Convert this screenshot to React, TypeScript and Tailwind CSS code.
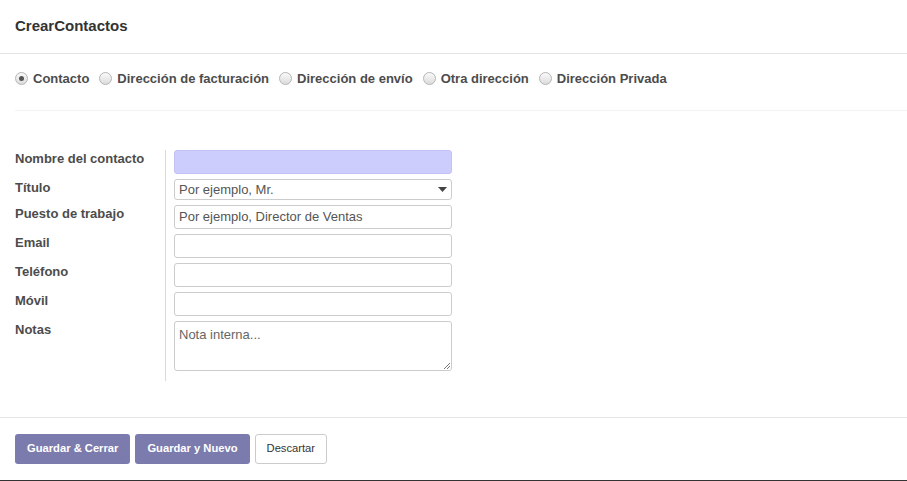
import React from 'react';

const tipos = ['Contacto', 'Dirección de facturación', 'Dirección de envío', 'Otra dirección', 'Dirección Privada'];

const Radio: React.FC<{ label: string; checked?: boolean }> = ({ label, checked }) => (
  <label className="flex items-center gap-[5px] mr-[10px]">
    <span className="w-[13px] h-[13px] rounded-full border border-[#b5b5b5] bg-gradient-to-b from-[#fafafa] to-[#dcdcdc] flex items-center justify-center">
      {checked && <span className="w-[5px] h-[5px] rounded-full bg-[#555]" />}
    </span>
    <span>{label}</span>
  </label>
);

const Field: React.FC<{ label: string; first?: boolean; children: React.ReactNode }> = ({ label, first, children }) => (
  <div className="flex">
    <div className={`w-[150px] leading-[16px] font-bold text-[#4c4c4c] ${first ? 'pt-[1px]' : 'pt-[6px]'}`}>{label}</div>
    <div className="w-[9px] border-l border-[#d9d9d9]" />
    {children}
  </div>
);

const inputCls = 'w-[278px] h-[24px] rounded-[3px] border border-[#ccc] px-[4px] text-[13px] text-[#555] bg-white';

export default function App() {
  return (
    <div className="w-[907px] h-[481px] bg-white flex flex-col text-[13px] text-[#4c4c4c] font-['Liberation_Sans',Arial,sans-serif] border-b border-[#333]">
      <div className="h-[54px] border-b border-[#e5e5e5] px-[15px] flex items-center">
        <h1 className="font-bold text-[15px] text-[#333]">CrearContactos</h1>
      </div>

      <div className="ml-[15px] h-[57px] border-b border-[#f3f3f3] flex items-center font-bold pb-[7px]">
        {tipos.map((t, i) => (
          <Radio key={t} label={t} checked={i === 0} />
        ))}
      </div>

      <div className="flex-1 px-[15px] pt-[39px]">
        <div className="flex flex-col">
          <Field label="Nombre del contacto" first>
            <div className="w-[278px] h-[24px] rounded-[3px] border border-[#c2c2f5] bg-[#ccccfd]" />
          </Field>
          <Field label="Título">
            <div className="pt-[5px]">
              <div className="w-[278px] h-[21px] rounded-[3px] border border-[#ccc] px-[4px] flex items-center justify-between text-[#555]">
                <span>Por ejemplo, Mr.</span>
                <svg width="9" height="5" viewBox="0 0 9 5">
                  <path d="M0 0 L9 0 L4.5 5 Z" fill="#444" />
                </svg>
              </div>
            </div>
          </Field>
          <Field label="Puesto de trabajo">
            <div className="pt-[5px]">
              <div className={`${inputCls} flex items-center`}>Por ejemplo, Director de Ventas</div>
            </div>
          </Field>
          <Field label="Email">
            <div className="pt-[5px]">
              <div className={inputCls} />
            </div>
          </Field>
          <Field label="Teléfono">
            <div className="pt-[5px]">
              <div className={inputCls} />
            </div>
          </Field>
          <Field label="Móvil">
            <div className="pt-[5px]">
              <div className={inputCls} />
            </div>
          </Field>
          <Field label="Notas">
            <div className="pt-[5px] pb-[10px]">
              <div className="relative w-[278px] h-[50px] rounded-[3px] border border-[#ccc] px-[4px] pt-[3px] text-[#666]">
                Nota interna...
                <svg width="7" height="7" viewBox="0 0 7 7" className="absolute right-[1px] bottom-[1px]">
                  <path d="M1 7 L7 1 M4 7 L7 4" stroke="#777" strokeWidth="1" />
                </svg>
              </div>
            </div>
          </Field>
        </div>
      </div>

      <div className="h-[63px] border-t border-[#e5e5e5] px-[15px] flex items-center gap-[5px] pb-[1px]">
        <button className="h-[30px] px-[12px] rounded-[3px] bg-[#7c7bad] text-white font-bold text-[11.2px]">Guardar &amp; Cerrar</button>
        <button className="h-[30px] px-[12px] rounded-[3px] bg-[#7c7bad] text-white font-bold text-[11.2px]">Guardar y Nuevo</button>
        <button className="h-[30px] px-[11px] rounded-[3px] border border-[#ccc] bg-white text-[#333] text-[11.2px]">Descartar</button>
      </div>
    </div>
  );
}
